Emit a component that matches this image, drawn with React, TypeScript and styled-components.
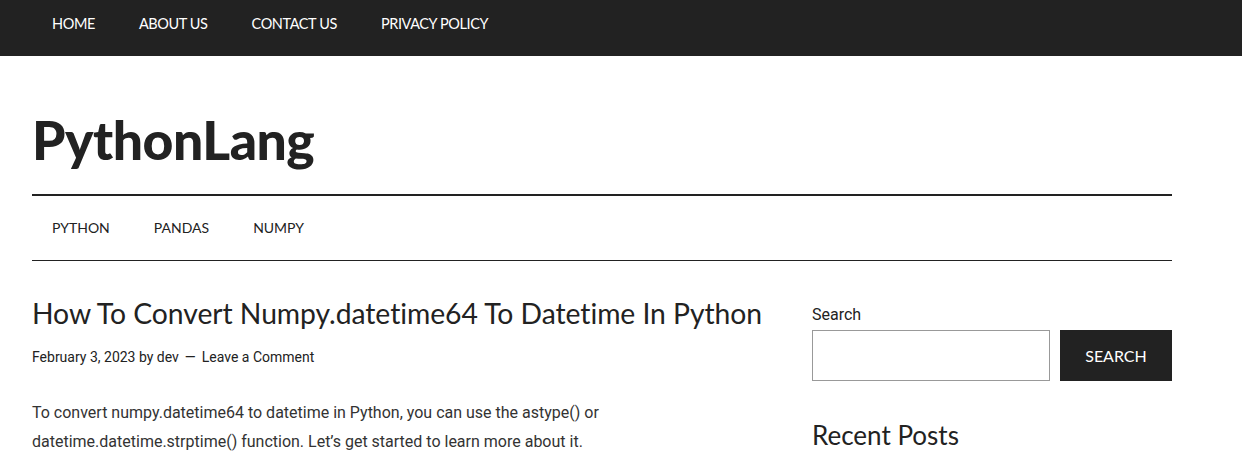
import styled, { createGlobalStyle } from "styled-components";

const GlobalStyle = createGlobalStyle`
  html, body {
    margin: 0;
    padding: 0;
    background: #fff;
  }
  body {
    font-family: Roboto, "Liberation Sans", sans-serif;
    color: #222;
    overflow: hidden;
  }
  * {
    box-sizing: border-box;
  }
`;

const heading = `Lato, "Open Sans", sans-serif`;

const TopBar = styled.nav`
  background: #222;
  height: 56px;
  display: flex;
  align-items: flex-start;
  padding: 0 32px;
`;

const TopMenu = styled.ul`
  list-style: none;
  display: flex;
  margin: 0;
  padding: 0;
`;

const TopItem = styled.li`
  font-family: ${heading};
  font-size: 14.5px;
  color: #fff;
  padding: 15px 22px 0 20px;
  letter-spacing: -0.4px;
  margin-right: 2px;
`;

const Wrap = styled.div`
  width: 1140px;
  margin: 0 32px;
`;

const SiteHeader = styled.header`
  height: 140px;
  padding-top: 57px;
  border-bottom: 2px solid #222;
`;

const Logo = styled.h1`
  margin: 0;
  font-family: ${heading};
  font-weight: 900;
  font-size: 53.5px;
  line-height: 1;
  letter-spacing: -0.5px;
  color: #222;
`;

const SubNav = styled.ul`
  list-style: none;
  margin: 0;
  padding: 0;
  height: 65px;
  display: flex;
  align-items: center;
  border-bottom: 1px solid #222;
`;

const SubItem = styled.li`
  font-family: ${heading};
  font-size: 14px;
  color: #222;
  padding: 0 22px 2px 20px;
  margin-right: 2px;
`;

const Columns = styled.div`
  display: grid;
  grid-template-columns: 740px 360px;
  column-gap: 40px;
  padding-top: 36px;
`;

const Article = styled.article``;

const Title = styled.h2`
  margin: 0;
  font-family: ${heading};
  font-weight: 400;
  font-size: 28.3px;
  line-height: 1.2;
  color: #222;
  letter-spacing: -0.05px;
`;

const Meta = styled.p`
  margin: 19px 0 0;
  font-size: 14px;
  line-height: 1;
  color: #222;
`;

const Dash = styled.span`
  margin: 0 6px;
`;

const Body = styled.p`
  margin: 34px 0 0;
  font-size: 16px;
  line-height: 29px;
  color: #333;
`;

const Sidebar = styled.aside`
  position: relative;
`;

const Label = styled.div`
  font-size: 16px;
  line-height: 1;
  color: #222;
  padding-top: 10px;
`;

const SearchRow = styled.div`
  display: flex;
  gap: 10px;
  margin-top: 7px;
`;

const Input = styled.div`
  width: 238px;
  height: 51px;
  border: 1px solid #999;
  background: #fff;
`;

const Button = styled.div`
  width: 112px;
  height: 51px;
  background: #222;
  color: #fff;
  font-family: ${heading};
  font-size: 16px;
  display: flex;
  align-items: center;
  justify-content: center;
  padding-bottom: 1px;
`;

const WidgetTitle = styled.h3`
  margin: 41px 0 0;
  font-family: ${heading};
  font-weight: 400;
  font-size: 26px;
  line-height: 1;
  color: #222;
`;

const Shadow = styled.div`
  position: absolute;
  left: 120px;
  top: 178px;
  width: 130px;
  height: 20px;
  border-radius: 50%;
  box-shadow: 0 -4px 14px rgba(0, 0, 0, 0.08);
`;

export default function App() {
  return (
    <>
      <GlobalStyle />
      <TopBar>
        <TopMenu>
          <TopItem>HOME</TopItem>
          <TopItem>ABOUT US</TopItem>
          <TopItem>CONTACT US</TopItem>
          <TopItem>PRIVACY POLICY</TopItem>
        </TopMenu>
      </TopBar>
      <Wrap>
        <SiteHeader>
          <Logo>PythonLang</Logo>
        </SiteHeader>
        <SubNav>
          <SubItem>PYTHON</SubItem>
          <SubItem>PANDAS</SubItem>
          <SubItem>NUMPY</SubItem>
        </SubNav>
        <Columns>
          <Article>
            <Title>How To Convert Numpy.datetime64 To Datetime In Python</Title>
            <Meta>
              February 3, 2023 by dev<Dash>—</Dash>Leave a Comment
            </Meta>
            <Body>
              To convert numpy.datetime64 to datetime in Python, you can use the astype() or
              <br />
              datetime.datetime.strptime() function. Let’s get started to learn more about it.
            </Body>
          </Article>
          <Sidebar>
            <Label>Search</Label>
            <SearchRow>
              <Input />
              <Button>SEARCH</Button>
            </SearchRow>
            <WidgetTitle>Recent Posts</WidgetTitle>
            <Shadow />
          </Sidebar>
        </Columns>
      </Wrap>
    </>
  );
}
